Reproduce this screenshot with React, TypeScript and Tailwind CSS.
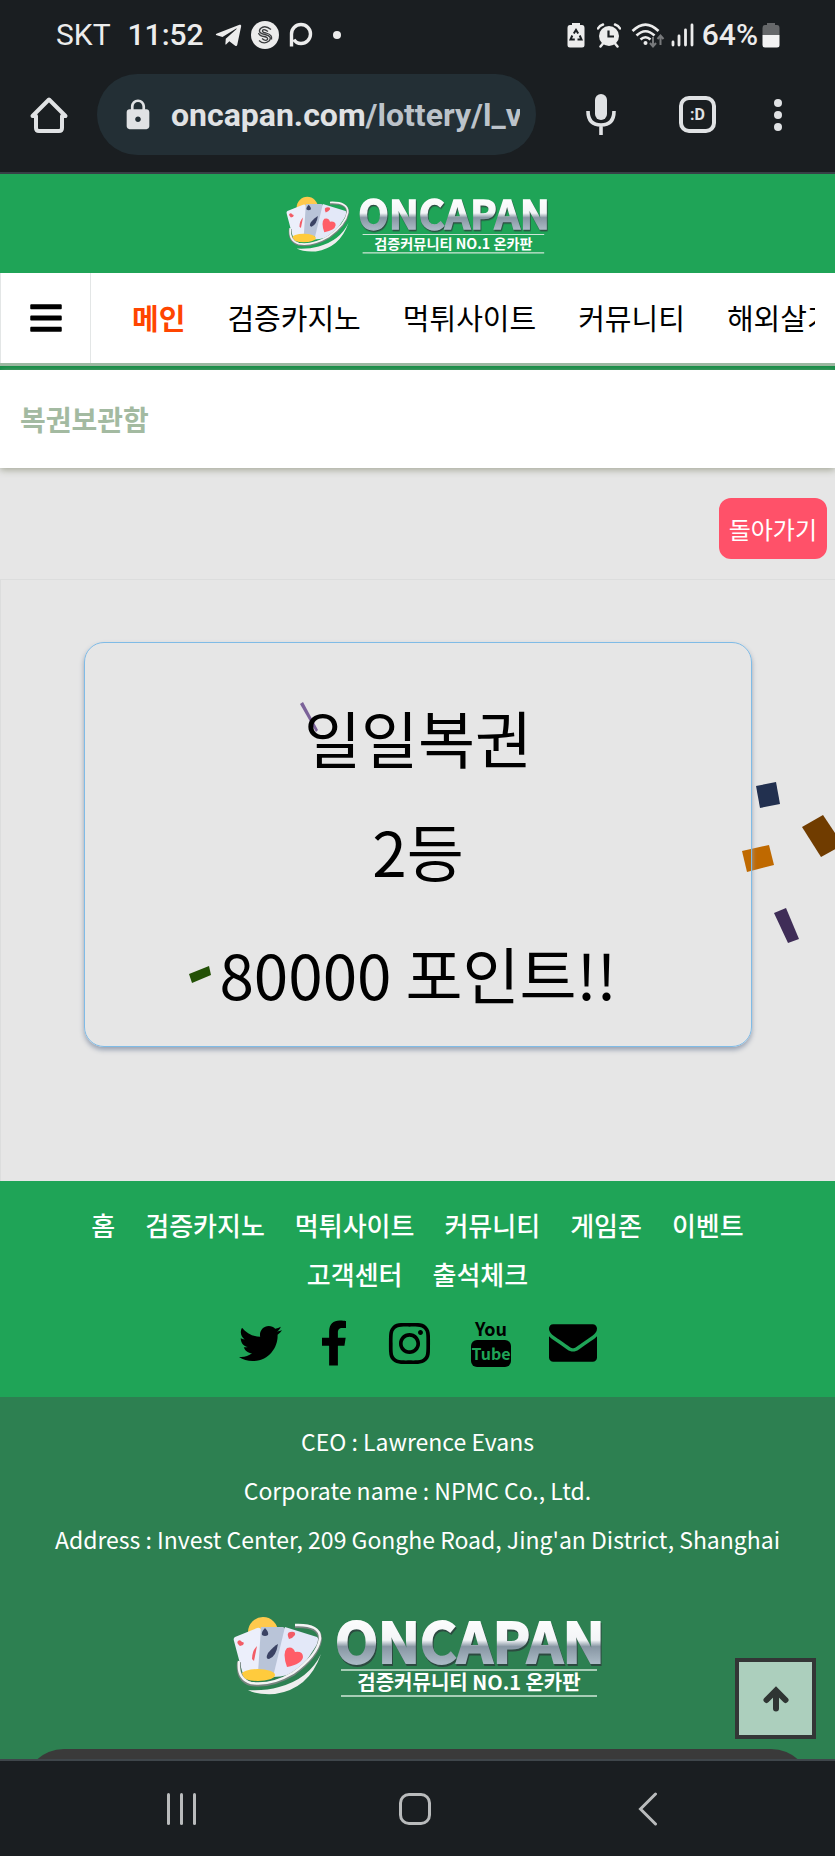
import { FaBars, FaFacebookF, FaInstagram, FaTelegramPlane, FaTwitter } from 'react-icons/fa';
import { MdLock } from 'react-icons/md';

const menu = [
  { label: '메인', active: true },
  { label: '검증카지노', active: false },
  { label: '먹튀사이트', active: false },
  { label: '커뮤니티', active: false },
  { label: '해외살기', active: false },
];

const footerLinks = ['홈', '검증카지노', '먹튀사이트', '커뮤니티', '게임존', '이벤트', '고객센터', '출석체크'];

const company = [
  'CEO : Lawrence Evans',
  'Corporate name : NPMC Co., Ltd.',
  "Address : Invest Center, 209 Gonghe Road, Jing'an District, Shanghai",
];

function Logo({ id, className }: { id: string; className: string }) {
  return (
    <svg viewBox="0 0 370 86" className={className} role="img" aria-label="ONCAPAN">
      <defs>
        <linearGradient id={id} x1="0" y1="0" x2="0" y2="1">
          <stop offset="0.2" stopColor="#ffffff" />
          <stop offset="0.52" stopColor="#f3f5f7" />
          <stop offset="0.6" stopColor="#8796a3" />
          <stop offset="0.8" stopColor="#a9b8c4" />
        </linearGradient>
      </defs>
      {/* Cards */}
      <circle cx="30" cy="19" r="15" fill="#ffc94d" />
      <path d="M2 24 L24 15 Q28 14 28 18 L34 60 L14 63 Q10 62 9 58 L1 28 Q0 25 2 24Z" fill="#eceffb" />
      <path d="M28 14 H50 Q53 15 52 19 L46 60 L25 60 Z" fill="#b9c4d8" />
      <path d="M52 14 L84 24 Q87 26 85 30 L68 56 Q55 64 40 64 Z" fill="#e3e8f8" />
      <path d="M7 33 Q3 30 5 28 Q7 26 9 29 Q12 29 10 32Z" fill="#f25c66" />
      <path d="M24 33 L21 48 L19 46 Q19 38 24 33Z" fill="#f25c66" />
      <path d="M32 15 Q36 19 35 22 Q32 24 29 22 Q28 19 32 15Z" fill="#3a4263" />
      <path d="M45 31 Q41 33 35 40 Q32 46 36 46 Q43 44 45 31Z" fill="#3a4263" />
      <path d="M56 26 Q53 20 57 19 Q63 18 62 22 Q60 25 56 26Z" fill="#f25c66" />
      <path d="M54 54 Q49 40 54 35 Q60 33 62 39 Q70 38 70 44 Q69 51 54 54Z" fill="#ff5d67" />
      <ellipse cx="25" cy="62" rx="17" ry="6" fill="#ffcb3d" />
      {/* Ring */}
      <path d="M62 13 Q88 12 87 27 Q84 44 60 61 Q38 74 18 71 Q4 67 6 49" fill="none" stroke="#76837f" strokeWidth="4" />
      <path d="M62 12 Q88 11 87 26 Q84 43 60 60 Q38 73 18 70 Q4 66 6 48" fill="none" stroke="#f4f4f4" strokeWidth="2.4" />
      <path d="M88 41 Q76 66 46 74 Q32 78 15 77 Q24 82 42 81 Q76 76 88 41Z" fill="#eeeeee" />
      {/* Wordmark */}
      <text
        x="102"
        y="50"
        fill={`url(#${id})`}
        stroke={`url(#${id})`}
        strokeWidth="2"
        className="drop-shadow-[1px_2px_0px_#2c4a40]"
        fontFamily='"Noto Sans CJK KR", sans-serif'
        fontWeight="700"
        fontSize="56"
      >
        ONCAPAN
      </text>
      <path d="M108 57 H364 M108 83 H364" stroke="#cfe6d8" strokeWidth="1.5" />
      <text x="236" y="77" textAnchor="middle" fill="#ffffff" fontFamily='"Noto Sans CJK KR", sans-serif' fontWeight="700" fontSize="20">
        검증커뮤니티 NO.1 온카판
      </text>
    </svg>
  );
}

function StatusBar() {
  return (
    <div className="flex items-center justify-between pt-4 pl-14 pr-[55px] font-medium text-[30px] leading-[38px] text-[#ececec]">
      <div className="flex items-center">
        <span className="font-normal">SKT</span>
        <span className="ml-[17px]">11:52</span>
        <FaTelegramPlane className="ml-[10px] size-[29px]" />
        <svg viewBox="0 0 28 28" className="ml-2 size-7">
          <circle cx="14" cy="14" r="14" fill="currentColor" />
          <path d="M20 8.5 Q14 3.5 9.5 7.5 Q6 12 14 13.5 Q22 15.5 18 20 Q13 24 8 19.5" fill="none" stroke="#3b3d3f" strokeWidth="1.3" />
          <path d="M17 10.5 Q13 7.500 11.500 9.500 Q11 11.500 15 12 Q22 14 20.500 18.500 M11 17.500 Q14.500 20.500 16.500 18.500 Q17.500 16.500 13 15.500 Q8.500 15 7.500 12" fill="none" stroke="#3b3d3f" strokeWidth="1.3" />
        </svg>
        <svg viewBox="0 0 24 26" className="ml-[10px] h-[26px] w-6" fill="none" stroke="currentColor" strokeWidth="3.4">
          <path d="M2.5 24.5 V12 A9.5 9.5 0 1 1 12 21.5 Q7 21.5 5 17.5" />
        </svg>
        <span className="ml-5 size-2 rounded-full bg-[#ececec]" />
      </div>
      <div className="flex items-center">
        <svg viewBox="0 0 18 26" className="h-[26px] w-[18px]">
          <path d="M5 1 H13 V3 H15 Q17.5 3 17.5 6 V23 Q17.5 25.5 15 25.5 H3 Q0.5 25.5 0.5 23 V6 Q0.5 3 3 3 H5Z" fill="currentColor" />
          <path d="M6.8 11.5 L9 8 L11.2 11.5 M12.7 13.5 L14.5 17.5 H10.5 M5.3 13.5 L3.5 17.5 H7.8" fill="none" stroke="#1a1e21" strokeWidth="2" />
        </svg>
        <svg viewBox="0 0 24 26" className="ml-3 h-[26px] w-6">
          <circle cx="12" cy="14" r="10" fill="currentColor" />
          <path d="M1 6.5 Q2.5 3.5 6 2.5 M23 6.5 Q21.5 3.5 18 2.5 M3.5 24.5 L6 21.5 M20.5 24.5 L18 21.5" stroke="currentColor" strokeWidth="2.5" fill="none" strokeLinecap="round" />
          <path d="M11.5 8.5 V14.5 H17" fill="none" stroke="#1a1e21" strokeWidth="2.2" />
        </svg>
        <svg viewBox="0 0 34 28" className="ml-[10px] h-7 w-[34px]" fill="none" stroke="currentColor" strokeWidth="2.6">
          <path d="M1.5 10 Q14.5 -3 27.5 10 M5.5 14.5 Q14.5 6 23.5 14.5 M9.5 18.5 Q14.5 14 19.5 18.5" />
          <circle cx="14.5" cy="22" r="2" fill="currentColor" stroke="none" />
          <path d="M22 16 V25 M19 22 L22 25.5 L25 22 M29.5 24 V15.5 M26.5 18 L29.5 14.5 L32.5 18" stroke="#77797b" strokeWidth="2" />
        </svg>
        <svg viewBox="0 0 24 24" className="ml-[5px] size-6" stroke="currentColor" strokeWidth="2.8" strokeLinecap="round">
          <path d="M3 19 V22 M9 13 V22 M15.5 7 V22 M22 2 V22" />
        </svg>
        <span className="ml-2">64%</span>
        <svg viewBox="0 0 18 26" className="ml-1 h-[26px] w-[18px]">
          <path d="M5 1 H13 V3 H15 Q17.5 3 17.5 6 V13 H0.5 V6 Q0.5 3 3 3 H5Z" fill="#66686a" />
          <path d="M0.5 13 H17.5 V23 Q17.5 25.5 15 25.5 H3 Q0.5 25.5 0.5 23Z" fill="#f3f3f3" />
        </svg>
      </div>
    </div>
  );
}

function BrowserBar() {
  return (
    <div className="flex items-center pt-5 pb-[17px] pl-[29px] pr-[53px] text-[#e0e2e4]">
      <button aria-label="Home">
        <svg viewBox="0 0 40 40" className="size-10" fill="none" stroke="currentColor" strokeWidth="4" strokeLinejoin="round">
          <path d="M3.5 21 L20 4.5 L36.5 21 H33 V33 Q33 36 30 36 H10 Q7 36 7 33 V21 Z" />
        </svg>
      </button>
      <div className="ml-7 flex h-[81px] min-w-0 flex-1 items-center rounded-full bg-[#232f35] pl-6 pr-4">
        <MdLock className="size-[34px] shrink-0" />
        <div className="ml-4 min-w-0 flex-1 overflow-hidden whitespace-nowrap text-[32px] font-bold">
          oncapan.com<span className="text-[#bcc3ca]">/lottery/l_view</span>
        </div>
      </div>
      <button aria-label="Voice search" className="ml-[49px]">
        <svg viewBox="0 0 32 44" className="h-11 w-8">
          <rect x="10" y="1" width="12" height="26" rx="6" fill="currentColor" />
          <path d="M3 18 Q3 32 16 32 Q29 32 29 18 M16 32 V42" fill="none" stroke="currentColor" strokeWidth="3.6" />
        </svg>
      </button>
      <button aria-label="Tabs" className="ml-[62px] flex size-[37px] items-center justify-center rounded-[10px] border-4 border-[#e0e2e4] text-base font-bold">
        :D
      </button>
      <button aria-label="More" className="ml-[58px] flex flex-col gap-1">
        <span className="size-2 rounded-full bg-[#e0e2e4]" />
        <span className="size-2 rounded-full bg-[#e0e2e4]" />
        <span className="size-2 rounded-full bg-[#e0e2e4]" />
      </button>
    </div>
  );
}

function Confetti() {
  return (
    <svg className="pointer-events-none absolute inset-0 size-full" aria-hidden="true">
      <polygon points="755,206 775,202 779,224 759,228" fill="#22304f" />
      <polygon points="801,247 822,235 842,265 820,277" fill="#703c00" />
      <polygon points="741,271 768,265 773,285 746,292" fill="#bf6900" />
      <polygon points="773,333 785,328 798,359 787,363" fill="#3f2d57" />
      <polygon points="188,394 208,386 210,395 191,403" fill="#235106" />
      <polygon points="299,124 302,122 317,150 315,152" fill="#7b6299" />
    </svg>
  );
}

export default function App() {
  return (
    <div className="flex min-h-screen flex-col bg-[#1a1e21] font-['Noto_Sans_CJK_KR',sans-serif]">
      <header className="border-b-2 border-[#374046] font-[Roboto,sans-serif]">
        <StatusBar />
        <BrowserBar />
      </header>

      <div className="relative flex flex-1 flex-col overflow-hidden bg-[#e6e6e6]">
        <div className="flex justify-center bg-[#1fa457] pt-5 pb-[18px]">
          <a href="#">
            <Logo id="logo-top" className="h-[61px]" />
          </a>
        </div>

        {/* Menu */}
        <nav className="relative flex h-[97px] border-b-4 border-[#108c43] bg-[#9cb8a1]">
          <div className="flex h-[90px] w-full bg-white pr-5">
            <button aria-label="메뉴" className="flex w-[91px] shrink-0 items-center justify-center border-x border-[#e3e6e6]">
              <FaBars className="size-9" />
            </button>
            <div className="flex min-w-0 flex-1 items-center gap-[42px] overflow-hidden whitespace-nowrap pl-[41px] text-[29px]">
              {menu.map((item) => (
                <a key={item.label} href="#" className={item.active ? 'font-bold text-[#ff4500]' : 'text-black'}>
                  {item.label}
                </a>
              ))}
            </div>
          </div>
        </nav>

        <div className="relative bg-white px-5 py-7 shadow-[0_2px_7px_#a5a898]">
          <h1 className="text-[28px] font-bold leading-[42px] text-[#a3baa1]">복권보관함</h1>
        </div>

        <div className="flex justify-end px-2 pt-[30px] pb-5">
          <button className="h-[61px] rounded-xl bg-[#ff5169] px-[10px] text-[24px] text-white">돌아가기</button>
        </div>

        {/* Result */}
        <main className="relative border-t border-l border-[#dcdddd] pt-[62px] pb-[134px]">
          <Confetti />
          <div className="relative mx-auto w-4/5 rounded-[20px] border border-[#7fbbe6] pt-[38px] pb-4 text-center text-[62px] leading-[113px] text-black shadow-[0_3px_5px_#9aa3b3]">
            <p>일일복권</p>
            <p>2등</p>
            <p className="mt-[10px]">80000 포인트!!</p>
          </div>
        </main>

        <footer className="flex flex-1 flex-col text-center text-white">
          <div className="bg-[#1fa457] px-[76px] pt-[19px] pb-[30px]">
            <div className="flex flex-wrap justify-center gap-x-[30px] text-[26px] font-medium leading-[49px]">
              {footerLinks.map((label) => (
                <a key={label} href="#">
                  {label}
                </a>
              ))}
            </div>
            <div className="mt-[21px] flex h-12 items-center justify-center gap-[38px] text-black">
              <a href="#" aria-label="Twitter">
                <FaTwitter className="size-[43px]" />
              </a>
              <a href="#" aria-label="Facebook">
                <FaFacebookF className="h-[46px] w-7" />
              </a>
              <a href="#" aria-label="Instagram">
                <FaInstagram className="size-[47px]" />
              </a>
              <a href="#" aria-label="YouTube">
                <svg viewBox="0 0 40 48" className="h-12 w-10" fontFamily='"Noto Sans CJK KR", sans-serif' fontWeight="700" textAnchor="middle">
                  <text x="20" y="17" fontSize="18">You</text>
                  <rect x="0" y="21" width="40" height="27" rx="6" />
                  <text x="20" y="41" fontSize="16" fill="#1fa457">Tube</text>
                </svg>
              </a>
              <a href="#" aria-label="Email">
                <svg viewBox="0 256 1792 1408" className="h-[38px] w-12" fill="currentColor">
                  <path d="M1792 710v794q0 66-47 113t-113 47h-1472q-66 0-113-47t-47-113v-794q44 49 101 87 362 246 497 345 57 42 92.500 65.500t94.500 48 110 24.500h2q51 0 110-24.500t94.500-48 92.500-65.500q170-123 498-345 57-39 100-87zm0-294q0 79-49 151t-122 123q-376 261-468 325-10 7-42.500 31t-54 38.500-52 32.500-57.500 27-50 9h-2q-23 0-50-9t-57.500-27-52-32.500-54-38.500-42.500-31q-91-64-262-182.500t-205-142.500q-62-42-117-115.500t-55-136.500q0-78 41.500-130t118.500-52h1472q65 0 112.500 47t47.500 113z" />
                </svg>
              </a>
            </div>
          </div>

          <div className="relative flex-1 overflow-hidden bg-[#2d8051] pt-5 pb-[59px]">
            {company.map((line) => (
              <p key={line} className="text-[23px] leading-[49px]">
                {line}
              </p>
            ))}
            <Logo id="logo-bottom" className="mx-auto mt-[49px] h-[86px]" />
            <div className="absolute inset-x-6 top-full -mt-[10px] h-20 rounded-full bg-[#3a3a3a]" />
          </div>
        </footer>

        <button
          aria-label="맨 위로"
          className="absolute right-[19px] bottom-5 flex size-[81px] items-center justify-center border-4 border-[#333636] bg-[#accfbd] text-[#2f3533]"
        >
          <svg viewBox="0 0 26 26" className="size-[26px]" fill="none" stroke="currentColor" strokeWidth="6" strokeLinecap="round">
            <path d="M3.5 14 L13 4.5 L22.5 14 M13 7 V22.500" />
          </svg>
        </button>
      </div>

      {/* System navigation */}
      <nav className="flex h-[97px] items-center border-t-2 border-[#3f464b] pl-[65px] pr-[71px] text-[#b9bbbc]">
        <button aria-label="Recents" className="flex flex-1 justify-center gap-[10px]">
          <span className="h-8 w-[3px] rounded-full bg-[#b9bbbc]" />
          <span className="h-8 w-[3px] rounded-full bg-[#b9bbbc]" />
          <span className="h-8 w-[3px] rounded-full bg-[#b9bbbc]" />
        </button>
        <button aria-label="Home screen" className="flex flex-1 justify-center">
          <span className="size-8 rounded-[10px] border-3 border-[#b9bbbc]" />
        </button>
        <button aria-label="Back" className="flex flex-1 justify-center">
          <svg viewBox="0 0 20 34" className="h-[34px] w-5" fill="none" stroke="currentColor" strokeWidth="3" strokeLinecap="round">
            <path d="M17.5 2 L2.5 17 L17.5 32" />
          </svg>
        </button>
      </nav>
    </div>
  );
}
